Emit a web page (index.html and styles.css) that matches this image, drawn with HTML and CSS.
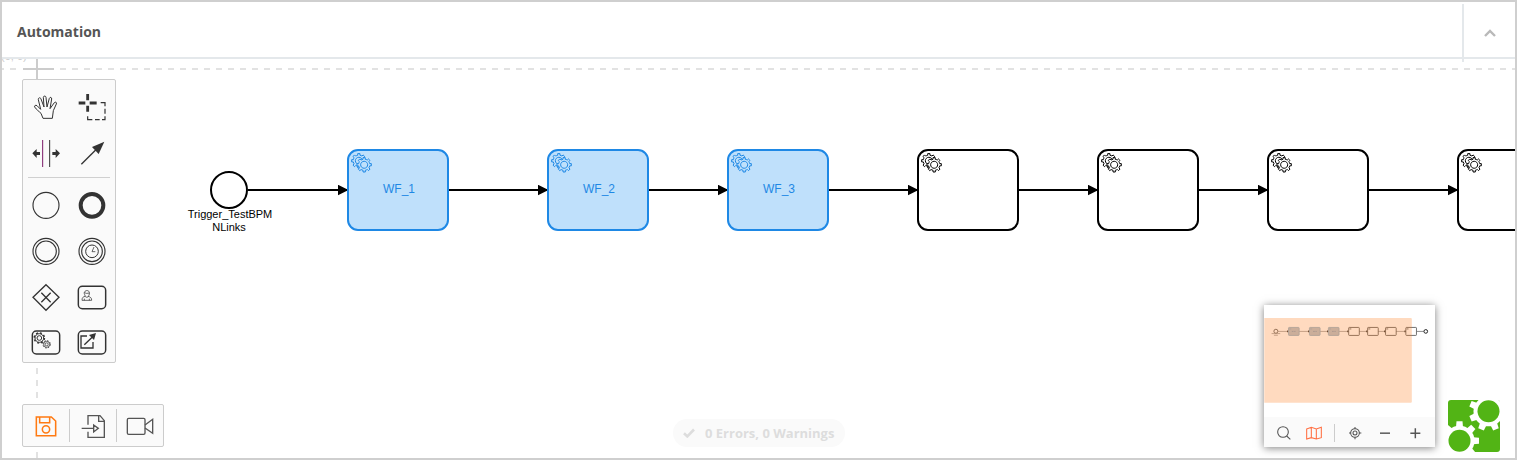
FILE: index.html
```
<!DOCTYPE html>
<html lang="en">
<head>
<meta charset="utf-8">
<title>Automation</title>
<link rel="stylesheet" href="styles.css">
</head>
<body>
<main class="frame">
  <header class="header">
    <h1 class="title">Automation</h1>
    <button class="collapse" aria-label="Collapse">
      <svg width="12" height="8" viewBox="0 0 12 8"><path d="M1 7 6 2l5 5"/></svg>
    </button>
  </header>

  <section class="canvas">
    <svg class="diagram" width="1513" height="399" viewBox="2 59 1513 399">
      <defs>
        <path id="gear" d="m0 0v-1.713c.352-.07.704-.178 1.048-.321.344-.145.666-.321.966-.521l1.194 1.18 1.568-1.577-1.195-1.18c.403-.614.683-1.299.825-2.018l1.622-.01v-2.22l-1.636.01c-.073-.352-.178-.7-.324-1.044-.145-.344-.321-.664-.522-.962l1.131-1.136-1.584-1.563-1.129 1.136c-.614-.401-1.303-.681-2.023-.823l.009-1.618h-2.241l.004 1.631c-.354.074-.705.18-1.05.324-.344.144-.665.321-.963.52l-1.17-1.158-1.567 1.579 1.168 1.157c-.402.613-.683 1.298-.824 2.017l-1.659.003v2.222l1.672-.006c.073.351.18.702.324 1.045.146.344.322.664.523.96l-1.199 1.197 1.584 1.56 1.196-1.193c.614.403 1.303.682 2.024.823v1.699zm.221-3.996c-1.788.75-3.857-.093-4.609-1.874-.752-1.783.09-3.846 1.88-4.596 1.788-.75 3.857.093 4.609 1.874.752 1.782-.091 3.846-1.88 4.596z"/>
        <g id="task">
          <rect width="100" height="80" rx="10" stroke-width="2"/>
          <use href="#gear" x="12" y="18"/>
          <circle cx="15.8" cy="15" r="5"  stroke="none"/>
          <use href="#gear" x="17.300" y="22"/>
        </g>
        <marker id="arrow" viewBox="0 0 10 10" refX="10" refY="5" markerWidth="11" markerHeight="11" markerUnits="userSpaceOnUse"><path d="M0 0 10 5 0 10z"/></marker>
      </defs>

      <path class="axis" d="M60 69H1515" stroke-dasharray="6 6"/>
      <path class="axis" d="M2 69h2M10 69h6"/>
      <path class="axis" d="M37 368V458" stroke-dasharray="6 6"/>
      <path class="origin" d="M23 69H54M37 59V82"/>
      <text class="origin-label" x="1" y="60">(0, 0)</text>

      <g class="flows">
        <path d="M248 190H348.500"/><path d="M449 190H548.500"/><path d="M649 190H728.500"/>
        <path d="M829 190H918.500"/><path d="M1019 190H1098.500"/><path d="M1199 190H1268.500"/>
        <path d="M1369 190H1458.500"/>
      </g>
      <circle class="start" cx="229" cy="190" r="18"/>
      <text class="label" x="230" y="218">Trigger_TestBPM</text>
      <text class="label" x="229" y="231">NLinks</text>
      <g class="linked">
        <use href="#task" x="348" y="150"/><use href="#task" x="548" y="150"/><use href="#task" x="728" y="150"/>
      </g>
      <g class="plain">
        <use href="#task" x="918" y="150"/><use href="#task" x="1098" y="150"/><use href="#task" x="1268" y="150"/><use href="#task" x="1458" y="150"/>
      </g>
      <text class="name" x="399" y="193">WF_1</text>
      <text class="name" x="599" y="193">WF_2</text>
      <text class="name" x="779" y="193">WF_3</text>
    </svg>

    <nav class="palette">
      <div class="tools">
        <svg viewBox="21 24 138 138"><path class="thin" d="M81 127 75 112C68 105 62 102 56 93c-2-4 3-7 7-4l11 11-7-29c-1-6 6-8 8-2l9 24-2-29c0-5 8-5 8 0l3 29 7-26c2-5 8-3 7 2l-5 29 13-18c4-4 8 0 6 4l-9 20-3 23z"/></svg>
        <svg viewBox="159 24 138 138"><path class="heavy" d="M215 54V73M215 89V107M188 81H208M221 81H242"/><path class="dash" d="M254 80h13v11M267 98v15M267 121v10h-9M251 131h-14M229 131h-14v-10"/></svg>
        <svg viewBox="21 162 138 138"><path class="purple" d="M80 192V273"/><path class="thin" d="M101 192V273"/><path class="solid" d="M49 232 62 219v9h10v9H62v9zM132 232l-13-13v9h-10v9h10v9z"/></svg>
        <svg viewBox="159 162 138 138"><path class="mid" d="M196 265 245 216"/><path class="solid" d="M265 197 228 213 248 234z"/></svg>
      </div>
      <hr class="rule">
      <div class="tools">
        <svg viewBox="21 21 138 138"><circle class="round" cx="90" cy="88" r="39"/></svg>
        <svg viewBox="159 21 138 138"><circle class="ring" cx="228" cy="88" r="34"/></svg>
        <svg viewBox="21 159 138 138"><circle class="round" cx="90" cy="226" r="39"/><circle class="round" cx="90" cy="226" r="31"/></svg>
        <svg viewBox="159 159 138 138"><circle class="round" cx="228" cy="226" r="39"/><circle class="round" cx="228" cy="226" r="31"/><circle class="thin" cx="228" cy="226" r="19"/><path class="fine" d="M234 213 228 227H238"/></svg>
        <svg viewBox="21 15 138 138"><path class="mid" d="M90 44 129 82 90 121 51 82zM76 68 104 97M104 68 76 97"/></svg>
        <svg viewBox="159 15 138 138"><rect class="box" x="187" y="49" width="82" height="67" rx="12"/><path class="fine" d="M206 74c-7-14 17-18 14-2q0 4-4 7c8 2 11 5 11 12h-29c0-8 3-11 10-12zM205 68q7 4 15 1M205 91v-5M220 91v-5M208 80q5 4 9 0"/></svg>
        <svg class="short" viewBox="21 153 138 123"><rect class="box" x="49" y="183" width="82" height="69" rx="12"/><circle class="teeth" cx="70" cy="204" r="15"/><circle class="thin-fill" cx="70" cy="204" r="13"/><circle class="thin" cx="70" cy="204" r="7"/><circle class="teeth small" cx="92" cy="223" r="11"/><circle class="fine" cx="92" cy="223" r="9"/><circle class="fine" cx="92" cy="223" r="4.500"/></svg>
        <svg class="short" viewBox="159 153 138 123"><rect class="box" x="187" y="183" width="82" height="69" rx="12"/><path class="mid" d="M213 198H195V234H231V216M205 224 230 200"/><path class="solid" d="M240 189 219 195 234 210z"/></svg>
      </div>
    </nav>

    <nav class="actions">
      <svg class="save" viewBox="69 135 138 123"><path d="M109 171h45l13 12v44h-58zM119 171v17h30v-17"/><circle cx="138" cy="208" r="11"/></svg>
      <svg viewBox="210 135 138 123"><path d="M264 194v-27h36l13 15v50h-49v-17M296 167v17h17M245 205h36M281 195l14 10-14 11z"/></svg>
      <svg viewBox="351 135 138 123"><rect x="382" y="175" width="53" height="48" rx="4"/><path d="M435 195 458 178V220L435 204"/></svg>
    </nav>

    <div class="status">
      <svg width="12" height="10" viewBox="0 0 12 10"><path d="M1 5.200 4.300 8.400 11 1.500"/></svg>
      <span>0 Errors, 0 Warnings</span>
    </div>

    <aside class="minimap">
      <svg class="overview" viewBox="42 27 513 337">
        <defs><g id="mini"><rect y="94.500" width="32" height="24" rx="2"/><path d="M2 99h6"/></g></defs>
        <path class="mini-flow" d="M84 106.500H467"/>
        <path class="mini-flow dark" d="M501 106.500H522"/>
        <path class="mini-tips" d="M111 106.500h4M174 106.500h4M231 106.500h4M292 106.500h4M349 106.500h4M403 106.500h4M464 106.500h4"/>
        <circle class="mini-node" cx="77" cy="106" r="6"/>
        <path class="mini-flow" d="M64 113h26M71 118h12"/>
        <g class="mini-linked"><use href="#mini" x="115"/><use href="#mini" x="178"/><use href="#mini" x="235"/></g>
        <path class="mini-name" d="M125 106.500h11M189 106.500h11M246 106.500h11"/>
        <g class="mini-node"><use href="#mini" x="296"/><use href="#mini" x="353"/><use href="#mini" x="407"/><use href="#mini" x="468"/></g>
        <circle class="mini-end" cx="528" cy="106.500" r="5.500"/>
        <path class="viewport" d="M42 66H483q3 0 3 3V318q0 3-3 3H42z"/>
      </svg>
      <div class="zoombar">
        <svg viewBox="57 366 90 90"><circle cx="99" cy="408" r="16"/><path d="M110 420 121 430"/></svg>
        <svg class="active" viewBox="147 366 90 90"><path d="M170 399 184 394 199 399 214 394V425L199 429 184 425 170 429zM184 394V425M199 399V429"/></svg>
        <span class="split"></span>
        <svg viewBox="270 366 90 90"><circle cx="315" cy="411" r="13"/><circle cx="315" cy="411" r="6"/><path d="M315 393v6M315 423v7M297 411h6M327 411h7"/></svg>
        <svg class="bold" viewBox="360 366 90 90"><path d="M390 411.500H420"/></svg>
        <svg class="bold" viewBox="450 366 90 90"><path d="M481 411.500H511M496 397V427"/></svg>
      </div>
    </aside>

    <svg class="logo" viewBox="0 0 52 52">
      <defs>
        <g id="cog"><circle r="15"/><path d="M-3-19.500h6l.5 6V13.500L3 19.500h-6l-.5-6V-13.500z"/><path transform="rotate(45)" d="M-3-19.500h6l.5 6V13.500L3 19.500h-6l-.5-6V-13.500z"/><path transform="rotate(90)" d="M-3-19.500h6l.5 6V13.500L3 19.500h-6l-.5-6V-13.500z"/><path transform="rotate(135)" d="M-3-19.500h6l.5 6V13.500L3 19.500h-6l-.5-6V-13.500z"/></g>
      </defs>
      <rect class="green" width="52" height="52" rx="3"/>
      <g class="white"><use href="#cog" transform="translate(40.500 11.300) rotate(22.500)"/><use href="#cog" transform="translate(11.500 40.700)"/></g>
      <circle class="green" cx="40.500" cy="11.300" r="11"/><circle class="green" cx="11.500" cy="40.700" r="11"/>
    </svg>
  </section>
</main>
</body>
</html>
```

FILE: styles.css
```
* { box-sizing: border-box; }
body { margin: 0; background: #fff; }
svg { display: block; flex: none; }

.frame {
  width: 1517px;
  height: 460px;
  border: 2px solid #cfcfcf;
  display: flex;
  flex-direction: column;
  font-family: "Open Sans", sans-serif;
}
.header {
  height: 57px;
  flex: none;
  display: flex;
  justify-content: space-between;
  align-items: flex-start;
  border-bottom: 2px solid #e4e8eb;
  padding: 2px 0 0 15px;
  position: relative;
  z-index: 1;
}
.title {
  margin: 0;
  font-size: 14px;
  line-height: 56px;
  font-weight: 700;
  color: #555;
}
.collapse {
  width: 53px;
  height: 58px;
  flex: none;
  display: flex;
  align-items: center;
  justify-content: center;
  padding: 0;
  border: 0;
  border-left: 2px solid #e4e8eb;
  background: none;
}
.collapse path { fill: none; stroke: #b9b9b9; stroke-width: 2.4; }

.canvas { flex: 1; position: relative; overflow: hidden; }

.axis { fill: none; stroke: #e2e2e2; stroke-width: 2; }
.origin { fill: none; stroke: #ccc; stroke-width: 2; }
.origin-label { font: 11px "Liberation Sans", sans-serif; fill: #ccc; }
.flows { fill: none; stroke: #000; stroke-width: 2; }
.flows path { marker-end: url(#arrow); }
#arrow path { fill: #000; stroke: none; }
.start { fill: #fff; stroke: #000; stroke-width: 2; }
.label { font: 11px "Liberation Sans", sans-serif; text-anchor: middle; fill: #000; }
.name { font: 12px "Liberation Sans", sans-serif; text-anchor: middle; fill: #1e88e5; }
.linked { fill: #bfe0fb; stroke: #1e88e5; }
.plain { fill: #fff; stroke: #000; }

.palette, .actions {
  position: absolute;
  left: 20px;
  background: #fafafa;
  border: 1px solid #ccc;
  border-radius: 2px;
}
.palette { top: 20px; width: 94px; height: 284px; padding-top: 4px; }
.tools { display: grid; grid-template-columns: 46px 46px; }
.tools svg { width: 46px; height: 46px; }
.tools .short { height: 41px; }
.rule { height: 1px; margin: 1px 5px 5px; border: 0; background: #d0d0d0; }
.thin, .fine, .mid, .heavy, .ring, .purple, .round, .box, .dash { fill: none; stroke: #333; }
.thin { stroke-width: 3; }
.round { stroke-width: 3.4; }
.fine { stroke-width: 2.2; }
.mid { stroke-width: 4; }
.box { stroke-width: 4.4; }
.dash { stroke-width: 3.6; }
.heavy { stroke-width: 8.5; }
.ring { stroke-width: 12; }
.purple { stroke: #7b1b68; stroke-width: 3; }
.solid { fill: #333; }
.thin-fill { fill: #fafafa; stroke: #333; stroke-width: 3; }
.teeth { fill: none; stroke: #333; stroke-width: 5; stroke-dasharray: 5.9 5.88; }
.teeth.small { stroke-width: 3; stroke-dasharray: 4.3 4.34; }

.actions { top: 345px; width: 142px; height: 43px; display: flex; }
.actions svg { width: 46px; height: 41px; fill: none; stroke: #555; stroke-width: 4; }
.actions .save { stroke: #ff7a12; stroke-width: 4.6; }
.actions svg + svg {
  box-sizing: content-box;
  border-left: 1px solid;
  border-image: linear-gradient(transparent 5px, #ccc 5px, #ccc 36px, transparent 36px) 1;
}

.status {
  position: absolute;
  left: 671px;
  top: 360px;
  width: 172px;
  height: 28px;
  padding-left: 10px;
  display: flex;
  align-items: center;
  gap: 10px;
  border-radius: 14px;
  background: #fafafa;
  color: #ddd;
  font-size: 13px;
  font-weight: 700;
  white-space: nowrap;
}
.status path { fill: none; stroke: #ddd; stroke-width: 2.6; }

.minimap {
  position: absolute;
  left: 1262px;
  top: 246px;
  width: 171px;
  height: 142px;
  background: #fff;
  box-shadow: 0 1px 8px rgba(0, 0, 0, .5);
}
.overview { width: 171px; height: 112px; }
.viewport { fill: #ff7a1a; fill-opacity: .28; }
.mini-flow { fill: none; stroke: #888; stroke-width: 2; }
.dark { stroke: #555; }
.mini-tips { stroke: #222; stroke-width: 5; }
.mini-node { fill: #fff; stroke: #555; stroke-width: 2.5; }
.mini-end { fill: #fff; stroke: #222; stroke-width: 3; }
.mini-linked { fill: #b8c2cc; stroke: #8fb0c8; stroke-width: 2.5; }
.mini-name { stroke: #7795b3; stroke-width: 2; stroke-dasharray: 5 2; }
.zoombar {
  height: 30px;
  padding: 1px 0 0 5px;
  display: flex;
  align-items: center;
  background: #fafafa;
}
.zoombar svg { width: 30px; height: 30px; fill: none; stroke: #555; stroke-width: 3.2; }
.zoombar .active { stroke: #ff7043; }
.zoombar .bold { stroke-width: 4.4; }
.split { width: 1px; height: 18px; margin: 0 5px; background: #ccc; }

.logo { position: absolute; left: 1446px; top: 341px; width: 52px; height: 52px; }
.green { fill: #52b415; }
.white { fill: #fff; }
```
